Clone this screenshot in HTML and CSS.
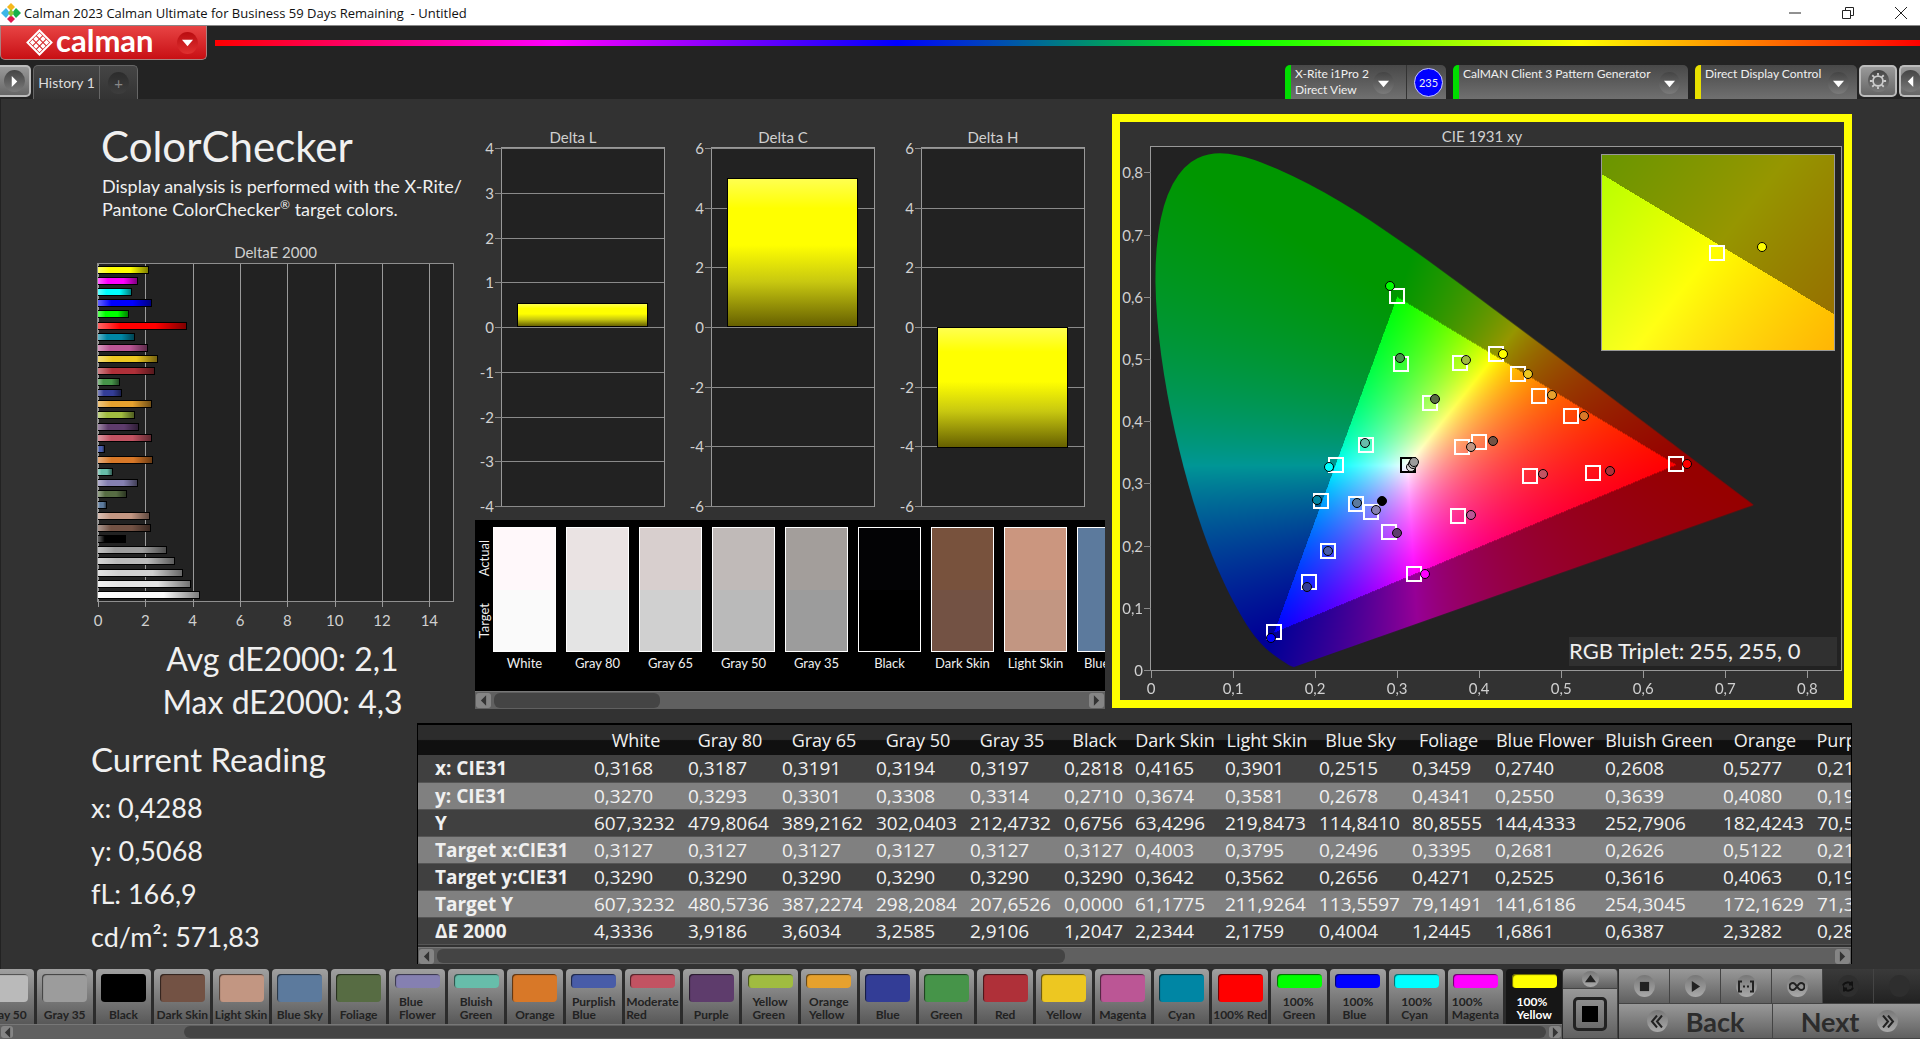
FILE: index.html
```html
<!DOCTYPE html>
<html lang="en">
<head>
    <meta charset="UTF-8">
    <meta name="viewport" content="width=device-width, initial-scale=1.0">
    <link rel="stylesheet" href="styles.css">
    <title>Calman 2023</title>
</head>
<body>
    <header class="titlebar">
        <svg class="app-icon" viewBox="0 0 20 20">
            <path d="M10 0l4 4-4 4-4-4z" fill="#f5b81c"/>
            <path d="M5 5l4 5-4 5-5-5z" fill="#3fb6e8"/>
            <path d="M15 5l5 5-5 5-4-5z" fill="#18b24b"/>
            <path d="M10 12l4 4-4 4-4-4z" fill="#e0184d"/>
            <path d="M10 6l3 4-3 4-3-4z" fill="#8fc93a"/>
        </svg>
        <span class="titlebar-text">Calman 2023 Calman Ultimate for Business 59 Days Remaining  - Untitled</span>
        <div class="window-buttons">
            <button aria-label="Minimize"><svg viewBox="0 0 12 12"><path d="M0 6h12"/></svg></button>
            <button aria-label="Restore"><svg viewBox="0 0 12 12"><path d="M.5 3.500h8v8h-8zM3.500 3.500v-3h8v8h-3"/></svg></button>
            <button aria-label="Close"><svg viewBox="0 0 12 12"><path d="M0 0l12 12M12 0L0 12"/></svg></button>
        </div>
    </header>

    <div class="brandrow">
        <button class="brand">
            <svg class="brand-logo" viewBox="0 0 28 28">
                <path d="M14 1.500L26.500 14 14 26.500 1.500 14z" fill="none" stroke="#fff" stroke-width="2"/>
                <path fill="#fff" d="M14 4l2.800 2.800L14 9.600l-2.800-2.800zM10.400 7.600l2.800 2.800-2.800 2.800-2.800-2.800zM17.600 7.600l2.800 2.800-2.800 2.800-2.800-2.800zM6.800 11.200L9.600 14l-2.800 2.800L4 14zM14 11.200l2.800 2.800-2.800 2.800-2.800-2.800zM21.200 11.200L24 14l-2.800 2.800-2.800-2.800zM10.400 14.800l2.800 2.800-2.800 2.800-2.800-2.800zM17.600 14.800l2.800 2.800-2.800 2.800-2.800-2.800zM14 18.400l2.800 2.800L14 24l-2.800-2.800z"/>
            </svg>
            <span>calman</span>
            <i class="knob knob-red"><svg viewBox="0 0 12 12"><path d="M0 3h12L6 10z"/></svg></i>
        </button>
        <div class="rainbow"></div>
    </div>

    <nav class="tabs">
        <button class="side-btn side-left" aria-label="Expand"><i class="knob"><svg viewBox="0 0 12 12"><path d="M3 0v12l6-6z"/></svg></i></button>
        <button class="tab">History 1</button>
        <button class="tab-add" aria-label="Add tab"><i class="knob knob-dark">+</i></button>
        <div class="sources">
            <button class="source source-meter"><span>X-Rite i1Pro 2<br>Direct View</span><i class="knob"><svg viewBox="0 0 12 12"><path d="M0 3h12L6 10z"/></svg></i></button>
            <div class="level"><b>235</b></div>
            <button class="source source-gen"><span>CalMAN Client 3 Pattern Generator</span><i class="knob"><svg viewBox="0 0 12 12"><path d="M0 3h12L6 10z"/></svg></i></button>
            <button class="source source-display"><span>Direct Display Control</span><i class="knob"><svg viewBox="0 0 12 12"><path d="M0 3h12L6 10z"/></svg></i></button>
        </div>
        <button class="side-btn" aria-label="Settings"><i class="knob"><svg class="gear" viewBox="0 0 20 20"><circle cx="10" cy="10" r="5.500"/><path d="M10 1v3M10 16v3M1 10h3M16 10h3M3.600 3.600l2.200 2.200M14.200 14.200l2.200 2.200M3.600 16.400l2.200-2.200M14.200 5.800l2.200-2.200"/></svg></i></button>
        <button class="side-btn side-right" aria-label="Collapse"><i class="knob"><svg viewBox="0 0 12 12"><path d="M9 0v12L3 6z"/></svg></i></button>
    </nav>

    <main>
        <div class="top">
            <section class="summary">
                <h1>ColorChecker</h1>
                <p class="desc">Display analysis is performed with the X-Rite/<br>Pantone ColorChecker<sup>®</sup> target colors.</p>
                <h2 class="chart-title">DeltaE 2000</h2>
                <div class="de-plot" id="dePlot"></div>
                <div class="averages">
                    <p>Avg dE2000: 2,1</p>
                    <p>Max dE2000: 4,3</p>
                </div>
            </section>

            <section class="middle">
                <div class="deltas" id="deltas"></div>
                <div class="compare">
                    <div class="compare-body">
                        <div class="compare-side"><span>Actual</span><span>Target</span></div>
                        <div class="compare-list" id="compare"></div>
                    </div>
                    <div class="scroll">
                        <button aria-label="Scroll left"><svg viewBox="0 0 8 12"><path d="M7 0v12L1 6z"/></svg></button>
                        <div class="track"><div class="thumb" style="width: 28%"></div></div>
                        <button aria-label="Scroll right"><svg viewBox="0 0 8 12"><path d="M1 0v12l6-6z"/></svg></button>
                    </div>
                </div>
            </section>

            <section class="cie">
                <h2 class="chart-title">CIE 1931 xy</h2>
                <div class="cie-plot" id="ciePlot">
                    <canvas id="gamut" width="690" height="524"></canvas>
                    <div class="cie-inset" id="inset"><canvas id="insetGamut" width="232" height="195"></canvas></div>
                    <div class="triplet">RGB Triplet: 255, 255, 0</div>
                </div>
            </section>
        </div>

        <div class="bottom">
            <section class="reading">
                <h2>Current Reading</h2>
                <p>x: 0,4288</p>
                <p>y: 0,5068</p>
                <p>fL: 166,9</p>
                <p>cd/m²: 571,83</p>
            </section>
            <section class="data">
                <div class="data-body"><table id="data"></table></div>
                <div class="scroll">
                    <button aria-label="Scroll left"><svg viewBox="0 0 8 12"><path d="M7 0v12L1 6z"/></svg></button>
                    <div class="track"><div class="thumb" style="width: 45%"></div></div>
                    <button aria-label="Scroll right"><svg viewBox="0 0 8 12"><path d="M1 0v12l6-6z"/></svg></button>
                </div>
            </section>
        </div>
    </main>

    <footer>
        <div class="strip">
            <div class="patches" id="patches"></div>
            <div class="scroll scroll-small">
                <button aria-label="Scroll left"><svg viewBox="0 0 8 12"><path d="M7 0v12L1 6z"/></svg></button>
                <div class="track"><div class="thumb" style="width: 89%; margin-left: 11%"></div></div>
                <button aria-label="Scroll right"><svg viewBox="0 0 8 12"><path d="M1 0v12l6-6z"/></svg></button>
            </div>
        </div>
        <div class="pattern">
            <button class="metal" aria-label="Show pattern"><i class="knob knob-light"><svg viewBox="0 0 12 12"><path d="M0 10h12L6 2z"/></svg></i></button>
            <button class="metal pattern-window" aria-label="Pattern window"><b></b></button>
        </div>
        <div class="transport">
            <div class="controls">
                <button class="metal" aria-label="Stop"><i class="knob knob-light"><svg viewBox="0 0 12 12"><path d="M1 1h10v10H1z"/></svg></i></button>
                <button class="metal" aria-label="Play"><i class="knob knob-light"><svg viewBox="0 0 12 12"><path d="M2 0v12l9-6z"/></svg></i></button>
                <button class="metal" aria-label="Read series"><i class="knob knob-light"><svg class="line" viewBox="0 0 16 12"><path d="M4 1H1v10h3M12 1h3v10h-3M5 6h2M9 6h2"/></svg></i></button>
                <button class="metal" aria-label="Continuous"><i class="knob knob-light"><svg class="line" viewBox="0 0 16 12"><path d="M8 6C6 3 5 2.500 4 2.500a3.500 3.500 0 0 0 0 7C5 9.500 6 9 8 6s3-3.500 4-3.500a3.500 3.500 0 0 1 0 7C11 9.500 10 9 8 6z"/></svg></i></button>
                <button class="metal off" aria-label="Refresh"><i class="knob"><svg class="line" viewBox="0 0 16 12"><path d="M3 5a5 4.500 0 0 1 9-1V1M12 4H9M13 7a5 4.500 0 0 1-9 1v3M4 8h3"/></svg></i></button>
                <button class="metal off" aria-label="Record"><i class="knob"></i></button>
            </div>
            <div class="steps">
                <button class="metal"><i class="knob knob-light"><svg class="line" viewBox="0 0 16 12"><path d="M8 0L3 6l5 6M13 0L8 6l5 6"/></svg></i>Back</button>
                <button class="metal">Next<i class="knob knob-light"><svg class="line" viewBox="0 0 16 12"><path d="M3 0l5 6-5 6M8 0l5 6-5 6"/></svg></i></button>
            </div>
        </div>
    </footer>
    <script src="script.js"></script>
</body>
</html>
```

FILE: styles.css
```css
*{ box-sizing: border-box; }
body{ margin: 0; height: 100vh; display: flex; flex-direction: column; overflow: hidden; background: #232323; color: #f0f0f0; font-family: Lato, "Noto Sans", sans-serif; font-size: 15px; }
h1, h2, p{ margin: 0; font-weight: normal; }
button{ font: inherit; color: inherit; margin: 0; padding: 0; border: 0; background: none; }
i{ font-style: normal; }
svg{ display: block; }

/* title bar */
.titlebar{ display: flex; align-items: center; height: 26px; flex: none; background: #fff; color: #111; border-bottom: 1px solid #888; font-family: "Open Sans", sans-serif; font-size: 13px; }
.app-icon{ width: 20px; height: 20px; margin: 0 3px 0 1px; }
.titlebar-text{ white-space: pre; }
.window-buttons{ display: flex; gap: 15px; margin-left: auto; }
.window-buttons button{ width: 38px; height: 25px; display: flex; align-items: center; justify-content: center; }
.window-buttons svg{ width: 12px; height: 12px; fill: none; stroke: #222; }

.brandrow{ display: flex; height: 39px; flex: none; }
.brand{ width: 207px; height: 34px; display: flex; align-items: center; padding: 0 8px 0 25px; border: 1px solid #aa8080; border-top: 0; border-radius: 0 0 5px 5px; background: linear-gradient(#e84444, #c80f14); color: #fff; font-size: 31px; line-height: 28px; font-weight: bold; }
.brand span{ padding-bottom: 5px; }
.brand-logo{ width: 27px; height: 27px; margin-right: 3px; }
.rainbow{ flex: 1; height: 6px; margin: 14px 0 0 8px; background: linear-gradient(90deg, #f00, #f0f 20%, #00f 40%, #0f0 60%, #ff0 80%, #f00); }

.knob{ display: flex; align-items: center; justify-content: center; flex: none; width: 21px; height: 22px; border-radius: 50%; background: linear-gradient(#444, #7a7a7a); }
.knob svg{ width: 11px; height: 11px; fill: #fff; }
.knob-red{ margin-left: auto; background: linear-gradient(#b90c10, #e03030); }
.knob-dark{ background: linear-gradient(#2c2c2c, #3d3d3d); color: #888; }
.knob-light{ background: linear-gradient(#777, #aaa); }
.knob-light svg{ fill: #222; }
.knob .line{ width: 16px; height: 13px; fill: none; stroke: #222; stroke-width: 2; }
.knob .gear{ width: 18px; height: 18px; fill: none; stroke: #ccc; stroke-width: 2; }

/* tabs and sources */
.tabs{ display: flex; height: 34px; flex: none; }
.tab, .tab-add{ border: 1px solid #666; border-bottom: 0; background: linear-gradient(#454545, #333); color: #ddd; }
.tab{ width: 67px; margin-left: 2px; border-radius: 5px 0 0 0; font-size: 14px; }
.tab-add{ width: 38px; display: flex; align-items: center; justify-content: center; border-left: 0; border-radius: 0 5px 0 0; }
.side-btn{ width: 38px; height: 32px; display: flex; align-items: center; justify-content: center; border: 2px solid #bbb; border-radius: 5px; background: linear-gradient(#999, #666); margin-left: 2px; }
.side-left{ width: 31px; margin-left: 0; border-left: 0; border-radius: 0 5px 5px 0; }
.side-right{ width: 21px; border-right: 0; border-radius: 5px 0 0 5px; overflow: hidden; }
.sources{ display: flex; margin-left: auto; }
.source{ display: flex; align-items: flex-start; justify-content: space-between; padding: 1px 8px 0 4px; border-left: 6px solid #0d0; border-radius: 5px 5px 0 0; background: linear-gradient(#484848, #707070); text-align: left; font-size: 12px; line-height: 16px; white-space: nowrap; }
.source .knob{ margin-top: 6px; }
.source-meter{ width: 121px; padding-right: 12px; border-radius: 5px 0 0 0; }
.source-gen{ width: 235px; margin: 0 7px; }
.source-display{ width: 162px; border-left-color: #e8e000; }
.level{ width: 40px; display: flex; align-items: center; justify-content: flex-end; padding-right: 3px; border-left: 1px solid #333; border-radius: 0 5px 0 0; background: linear-gradient(#484848, #707070); }
.level b{ width: 29px; height: 29px; border: 1px solid #ccf; border-radius: 50%; background: #00f; font-size: 11px; line-height: 27px; font-weight: normal; text-align: center; }

main{ flex: 1; min-height: 0; display: flex; flex-direction: column; background: #323232; border-left: 1px solid #222; }
.top{ flex: 1; min-height: 0; display: grid; grid-template-columns: 467fr 644fr 808fr; }
.top section{ min-width: 0; }
.chart-title{ font-size: 15px; line-height: 20px; text-align: center; color: #d0d0d0; }

/* left column */
.summary{ display: flex; flex-direction: column; padding: 22px 14px 0 96px; }
.summary h1{ margin-bottom: 4px; padding-left: 4px; font-size: 42px; line-height: 50px; }
.desc{ padding-left: 5px; font-size: 18px; line-height: 23px; white-space: nowrap; }
.desc sup{ font-size: 12px; line-height: 0; }
.summary .chart-title{ margin-top: 21px; }
.de-plot{ flex: 1; position: relative; display: flex; flex-direction: column; justify-content: space-around; margin: 1px 0 35px; border: 1px solid #8f8f8f; background: #222; }
.de-bar{ position: relative; height: 8px; border: 1px solid #000; border-left: 0; background-image: linear-gradient(90deg, rgba(255,255,255,.4), transparent 25%, transparent 65%, rgba(0,0,0,.5)); }
.vline{ position: absolute; top: 0; bottom: -6px; width: 1px; background: #9a9a9a; }
.vline span{ position: absolute; top: 100%; left: -20px; width: 40px; padding-top: 3px; text-align: center; color: #d0d0d0; line-height: 20px; }
.averages{ height: 78px; padding-left: 14px; text-align: center; font-size: 32px; line-height: 43px; }

/* delta charts */
.middle{ display: flex; flex-direction: column; padding: 28px 7px 6px 0; }
.deltas{ flex: 1; display: grid; grid-template-columns: repeat(3, 1fr); padding: 0 7px 13px 0; }
.delta{ display: flex; flex-direction: column; }
.delta-plot{ flex: 1; position: relative; margin: 0 13px 0 33px; border: 1px solid #999; background: #222; }
.hline{ position: absolute; left: -7px; right: 0; height: 1px; background: #8a8a8a; }
.hline span{ position: absolute; right: 100%; top: -10px; padding-right: 1px; line-height: 20px; color: #d0d0d0; }
.delta-bar{ position: absolute; left: 9%; right: 10%; border: 1px solid #000; background: linear-gradient(#ffff50, #ff0 20%, #ff0 45%, #c8c810 70%, #666000); }

/* actual / target swatches */
.compare{ margin-left: 7px; height: 189px; background: #000; display: flex; flex-direction: column; }
.compare-body{ flex: 1; display: flex; overflow: hidden; padding-top: 7px; }
.compare-side{ flex: none; width: 18px; height: 125px; display: flex; flex-direction: column; justify-content: space-around; align-items: center; font-size: 13px; line-height: 18px; }
.compare-side span{ writing-mode: vertical-rl; transform: rotate(180deg); }
.compare-list{ display: flex; gap: 10px; }
.swatch{ flex: none; width: 63px; text-align: center; font-size: 13px; line-height: 22px; white-space: nowrap; }
.swatch div{ height: 125px; border: 1px solid #fff; }

.scroll{ display: flex; align-items: center; flex: none; height: 18px; padding: 0 1px; background: #606060; border-top: 1px solid #777; }
.scroll button{ width: 15px; height: 15px; display: flex; align-items: center; justify-content: center; border-radius: 3px; background: #858585; }
.scroll button svg{ width: 7px; height: 11px; fill: #333; }
.track{ flex: 1; height: 100%; margin: 0 3px; padding: 1px 0; }
.thumb{ height: 100%; border-radius: 6px; background: #444; }
.scroll-small{ height: 15px; }
.scroll-small button{ width: 12px; height: 12px; }

/* chromaticity diagram */
.cie{ display: flex; flex-direction: column; margin: 15px 68px 7px 0; padding: 4px 2px 29px 30px; border: 8px solid #ff0; }
.cie .chart-title{ padding-right: 28px; }
.cie-plot{ flex: 1; position: relative; border: 1px solid #999; background: #222; }
.cie-plot canvas{ position: absolute; width: 100%; height: 100%; }
.cie-inset{ position: absolute; right: 6px; top: 7px; width: 234px; height: 197px; border: 1px solid #999; }
.triplet{ position: absolute; right: 4px; bottom: 4px; width: 268px; height: 29px; background: #303030; font-size: 22px; line-height: 28px; }
.cie-plot .vline{ top: 100%; bottom: -8px; }
.cie-plot .vline span{ padding-top: 0; }
.cie-plot .hline{ right: 100%; }
.mark{ position: absolute; width: 16px; height: 16px; margin: -8px; border: 2px solid #fff; }
.dot{ position: absolute; width: 10px; height: 10px; margin: -5px; border: 1px solid #000; border-radius: 50%; }

/* reading and data table */
.bottom{ flex: none; height: 254px; display: flex; }
.reading{ flex: none; width: 416px; padding: 20px 0 0 90px; font-size: 27px; line-height: 43px; }
.reading h2{ margin-bottom: 3px; font-size: 33px; line-height: 48px; }
.data{ flex: 1; min-width: 0; height: 241px; margin: 8px 68px 0 0; border: 1px solid #000; border-top-width: 2px; }
.data-body{ overflow: hidden; height: 222px; }
.data .scroll{ height: 17px; }
table{ width: 1514px; table-layout: fixed; border-collapse: collapse; white-space: nowrap; font-family: "Open Sans", sans-serif; font-size: 19px; line-height: 26px; }
thead th{ height: 30px; padding: 0; background: linear-gradient(#2c2c2c 48%, #101010 52%); font-size: 18px; font-weight: normal; }
tbody th{ padding: 0 0 0 17px; text-align: left; }
td{ padding: 0 0 0 5px; }
tbody tr{ height: 27px; background: #404040; border-bottom: 1px solid #555; }
tbody tr:nth-child(even){ background: #808080; }

/* patch strip and transport */
footer{ flex: none; height: 70px; display: flex; background: #2c2c2c; }
.strip{ flex: 1; min-width: 0; display: flex; flex-direction: column; overflow: hidden; }
.patches{ height: 55px; display: flex; gap: 3px; margin-left: -22px; }
.patch{ flex: 1 1 0; min-width: 0; height: 55px; display: flex; flex-direction: column; justify-content: space-between; align-items: center; padding: 5px 0 3px; border-radius: 4px 4px 0 0; background: linear-gradient(#a0a0a0, #585858); color: #222; font-size: 12px; font-weight: bold; line-height: 13px; text-align: left; }
.patch i{ width: 45px; height: 28px; flex: none; border-radius: 4px; box-shadow: inset 1px 1px 1px rgba(0,0,0,.6); }
.patch.two i{ height: 14px; }
.patch span{ white-space: pre; }
.patch.on{ background: #161616; color: #fff; }
.metal{ display: flex; align-items: center; justify-content: center; border: 1px solid #444; border-width: 0 1px 1px 0; background: linear-gradient(#999, #606060); color: #2c2c2c; }
.pattern{ width: 56px; padding-left: 1px; display: flex; flex-direction: column; }
.pattern .metal{ height: 20px; border-radius: 4px 4px 0 0; }
.pattern .knob{ width: 17px; height: 16px; }
.pattern .pattern-window{ flex: 1; border-radius: 0; }
.pattern-window b{ width: 34px; height: 34px; border: 3px solid #222; border-radius: 5px; padding: 6px; background: #000 content-box; }
.transport{ width: 302px; display: flex; flex-direction: column; padding-left: 1px; overflow: hidden; }
.controls{ display: flex; height: 35px; }
.controls .metal{ flex: 0 0 51px; }
.controls .off{ background: linear-gradient(#3a3a3a, #222); }
.controls .off .knob{ background: #2e2e2e; }
.controls .off .line{ stroke: #111; }
.steps{ display: flex; flex: 1; font-size: 27px; }
.steps .metal{ flex: 0 0 154px; gap: 18px; font-weight: bold; }
```

FILE: script.js
```javascript
const $ = id => document.getElementById(id);
const el = (cls, parent, html = "") => {
    const d = document.createElement("div");
    d.className = cls;
    d.innerHTML = html;
    parent.appendChild(d);
    return d;
};

// name, patch colour, dE2000
const colors = [
    ["White", "#fafafa", 4.33], ["Gray 80", "#e4e4e4", 3.92], ["Gray 65", "#d0d0d0", 3.6], ["Gray 50", "#bababa", 3.26],
    ["Gray 35", "#9c9c9c", 2.91], ["Black", "#000", 1.2], ["Dark Skin", "#735244", 2.23], ["Light Skin", "#c29682", 2.18],
    ["Blue Sky", "#5c7a9d", 0.4], ["Foliage", "#576c43", 1.24], ["Blue\nFlower", "#8580b1", 1.69], ["Bluish\nGreen", "#67bdaa", 0.64],
    ["Orange", "#d87828", 2.33], ["Purplish\nBlue", "#485ca8", 0.28], ["Moderate\nRed", "#c25362", 2.3], ["Purple", "#5e3c6c", 1.75],
    ["Yellow\nGreen", "#a0bc40", 1.55], ["Orange\nYellow", "#e6a12e", 2.3], ["Blue", "#333d96", 1.0], ["Green", "#469449", 0.95],
    ["Red", "#af3039", 2.4], ["Yellow", "#edc721", 2.55], ["Magenta", "#bb5695", 2.1], ["Cyan", "#0086a4", 1.55],
    ["100% Red", "#f00", 3.75], ["100%\nGreen", "#0f0", 1.3], ["100%\nBlue", "#00f", 2.3], ["100%\nCyan", "#0ff", 1.45],
    ["100%\nMagenta", "#f0f", 1.7], ["100%\nYellow", "#ff0", 2.15]
];

// dE chart
for (let v = 0; v < 15; v += 2) el("vline", $("dePlot"), `<span>${v}</span>`).style.left = v / 15 * 100 + "%";
[...colors].reverse().forEach(c => {
    const bar = el("de-bar", $("dePlot"));
    bar.style.width = c[2] / 15 * 100 + "%";
    bar.style.backgroundColor = c[1];
});

// delta charts: title, range, step, value
[["Delta L", 4, 1, 0.54], ["Delta C", 6, 2, 5], ["Delta H", 6, 2, -4.05]].forEach(([title, max, step, value]) => {
    const box = el("delta", $("deltas"), `<h2 class="chart-title">${title}</h2>`);
    const plot = el("delta-plot", box);
    const pos = v => (max - v) / (2 * max) * 100;
    for (let v = max; v >= -max; v -= step) el("hline", plot, `<span>${v}</span>`).style.top = pos(v) + "%";
    const bar = el("delta-bar", plot);
    bar.style.top = pos(Math.max(value, 0)) + "%";
    bar.style.height = Math.abs(value) / (2 * max) * 100 + "%";
});

// actual over target
const actual = ["#fff8fa", "#eae3e3", "#d8cfce", "#c0bab8", "#a39e9b", "#030305", "#78523d", "#cb967f", "#5c7a9d"];
actual.forEach((a, i) => {
    const s = el("swatch", $("compare"), `<div></div>${colors[i][0]}`);
    s.firstChild.style.background = `linear-gradient(${a} 50%, ${colors[i][1]} 50%)`;
});

// patch strip
colors.slice(3).forEach(([name, color]) => {
    const b = document.createElement("button");
    b.className = "patch" + (name.includes("\n") ? " two" : "") + (name == "100%\nYellow" ? " on" : "");
    b.innerHTML = `<i style="background: ${color}"></i><span>${name}</span>`;
    $("patches").appendChild(b);
});

// chromaticity diagram
const locus = [[.1741,.005],[.1714,.0051],[.1644,.0109],[.1566,.0177],[.144,.0297],[.1355,.0399],[.1241,.0578],[.1096,.0868],[.0913,.1327],[.0687,.2007],
    [.0454,.295],[.0235,.4127],[.0082,.5384],[.0039,.6548],[.0139,.7502],[.0389,.812],[.0743,.8338],[.1142,.8262],[.1547,.8059],[.1929,.7816],[.2296,.7543],
    [.2658,.7243],[.3016,.6923],[.3373,.6589],[.3731,.6245],[.4441,.5547],[.5125,.4866],[.5752,.4242],[.627,.3725],[.6658,.334],[.6915,.3083],[.719,.2809],[.7347,.2653]];

function fillGamut(canvas, x0, x1, y0, y1, clip) {
    const w = canvas.width, h = canvas.height;
    const ctx = canvas.getContext("2d");
    const img = ctx.createImageData(w, h);
    for (let j = 0; j < h; j++) {
        for (let i = 0; i < w; i++) {
            const x = x0 + (i + .5) / w * (x1 - x0);
            const y = Math.max(y1 - (j + .5) / h * (y1 - y0), .0001);
            const z = 1 - x - y;
            const rgb = [3.2406 * x - 1.5372 * y - .4986 * z, -.9689 * x + 1.8758 * y + .0415 * z, .0557 * x - .204 * y + 1.057 * z];
            const top = Math.max(...rgb);
            const dim = Math.min(...rgb) < 0 ? 150 : 255;
            const p = (j * w + i) * 4;
            rgb.forEach((c, k) => img.data[p + k] = Math.max(c, 0) / top * dim);
            img.data[p + 3] = 255;
        }
    }
    ctx.putImageData(img, 0, 0);
    if (!clip) return;
    const pts = locus.map(([x, y]) => [(x - x0) / (x1 - x0) * w, (y1 - y) / (y1 - y0) * h]);
    ctx.globalCompositeOperation = "destination-in";
    ctx.beginPath();
    ctx.moveTo(...pts[0]);
    for (let n = 1; n < pts.length - 1; n++) {
        ctx.quadraticCurveTo(...pts[n], (pts[n][0] + pts[n + 1][0]) / 2, (pts[n][1] + pts[n + 1][1]) / 2);
    }
    ctx.lineTo(...pts[pts.length - 1]);
    ctx.closePath();
    ctx.fill();
}
const MAX = .841;
fillGamut($("gamut"), 0, MAX, 0, MAX, true);
fillGamut($("insetGamut"), .3957, .4428, .4770, .5292, false);

for (let n = 0; n <= 8; n++) {
    const label = n ? "0," + n : "0";
    el("vline", $("ciePlot"), `<span>${label}</span>`).style.left = n / 10 / MAX * 100 + "%";
    el("hline", $("ciePlot"), `<span>${label}</span>`).style.top = (1 - n / 10 / MAX) * 100 + "%";
}
function place(cls, parent, left, top, color) {
    const m = el(cls, parent);
    m.style.left = left * 100 + "%";
    m.style.top = top * 100 + "%";
    if (color) m.style[cls == "dot" ? "backgroundColor" : "borderColor"] = color;
}
// target x, y, measured x, y, colour
const points = [
    [.3127,.329,.3168,.327,"#ddd"], [.3127,.329,.3194,.3308,"#bbb"], [.3127,.329,.3205,.334,"#9c9c9c"], [.4003,.3662,.4165,.3684,"#735244"],
    [.3795,.3582,.3901,.3591,"#c29682"], [.2496,.2676,.2515,.2688,"#5c7a9d"], [.3395,.4291,.3459,.4361,"#576c43"], [.2681,.2545,.2745,.257,"#8580b1"],
    [.2626,.3626,.2608,.3649,"#67bdaa"], [.5122,.4083,.5277,.409,"#d87828"], [.216,.191,.216,.192,"#485ca8"], [.462,.3125,.4775,.315,"#c25362"],
    [.29,.222,.3,.22,"#5e3c6c"], [.377,.494,.3845,.499,"#a0bc40"], [.4735,.441,.4885,.443,"#e6a12e"], [.192,.1415,.19,.134,"#333d96"],
    [.305,.492,.303,.5015,"#469449"], [.539,.317,.56,.3195,"#af3039"], [.4475,.476,.4595,.476,"#edc721"], [.374,.2475,.39,.25,"#bb5695"],
    [.2075,.271,.202,.273,"#0086a4"], [.64,.332,.6535,.331,"#f00"], [.3,.602,.291,.6175,"#0f0"], [.15,.0615,.146,.052,"#00f"],
    [.225,.3295,.217,.327,"#0ff"], [.321,.1545,.334,.155,"#f0f"], [.4205,.5075,.4288,.5085,"#ff0"]
];
points.forEach(([tx, ty], i) => place("mark", $("ciePlot"), tx / MAX, 1 - ty / MAX, i < 3 ? "#000" : ""));
points.forEach(([, , x, y, c]) => place("dot", $("ciePlot"), x / MAX, 1 - y / MAX, c));
place("dot", $("ciePlot"), .2818 / MAX, 1 - .272 / MAX, "#000");
place("mark", $("inset"), .495, .5);
place("dot", $("inset"), .69, .47, "#ff0");

// data table
const widths = [171, 94, 94, 94, 94, 94, 71, 90, 94, 93, 83, 110, 118, 94, 120];
const head = ["", "White", "Gray 80", "Gray 65", "Gray 50", "Gray 35", "Black", "Dark Skin", "Light Skin", "Blue Sky", "Foliage", "Blue Flower", "Bluish Green", "Orange", "Purplish Blue"];
const rows = `x: CIE31|0,3168|0,3187|0,3191|0,3194|0,3197|0,2818|0,4165|0,3901|0,2515|0,3459|0,2740|0,2608|0,5277|0,21
y: CIE31|0,3270|0,3293|0,3301|0,3308|0,3314|0,2710|0,3674|0,3581|0,2678|0,4341|0,2550|0,3639|0,4080|0,19
Y|607,3232|479,8064|389,2162|302,0403|212,4732|0,6756|63,4296|219,8473|114,8410|80,8555|144,4333|252,7906|182,4243|70,5
Target x:CIE31|0,3127|0,3127|0,3127|0,3127|0,3127|0,3127|0,4003|0,3795|0,2496|0,3395|0,2681|0,2626|0,5122|0,21
Target y:CIE31|0,3290|0,3290|0,3290|0,3290|0,3290|0,3290|0,3642|0,3562|0,2656|0,4271|0,2525|0,3616|0,4063|0,19
Target Y|607,3232|480,5736|387,2274|298,2084|207,6526|0,0000|61,1775|211,9264|113,5597|79,1491|141,6186|254,3045|172,1629|71,3
ΔE 2000|4,3336|3,9186|3,6034|3,2585|2,9106|1,2047|2,2344|2,1759|0,4004|1,2445|1,6861|0,6387|2,3282|0,28`.split("\n");
$("data").innerHTML = "<colgroup>" + widths.map(w => `<col style="width: ${w}px">`).join("") + "</colgroup>"
    + "<thead><tr>" + head.map(h => `<th>${h}</th>`).join("") + "</tr></thead><tbody>"
    + rows.map(r => "<tr>" + r.split("|").map((c, i) => i ? `<td>${c}</td>` : `<th>${c}</th>`).join("") + "</tr>").join("") + "</tbody>";
```
